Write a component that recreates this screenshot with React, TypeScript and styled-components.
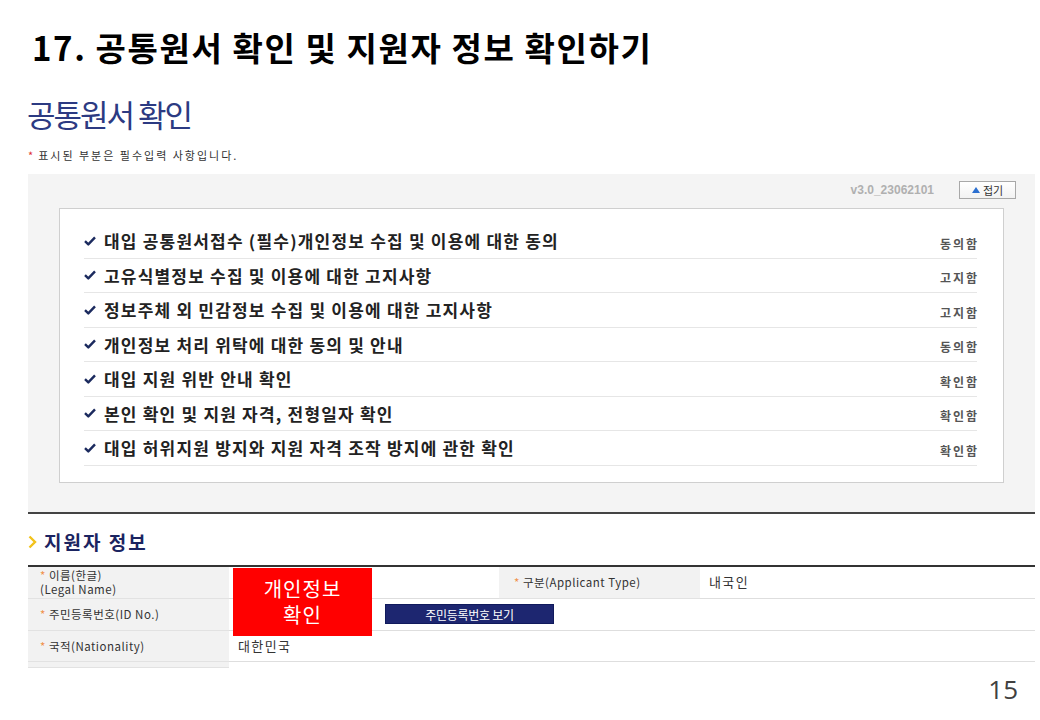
import React from "react"
import styled, { createGlobalStyle } from "styled-components"

const KR = `"Noto Sans CJK KR", "Liberation Sans", sans-serif`

const GlobalStyle = createGlobalStyle`
	html, body {
		margin: 0;
		padding: 0;
		background: #ffffff;
	}
	body {
		font-family: ${KR};
		color: #222;
	}
`

type Agreement = {
	text: string
	status: string
}

const agreements: Agreement[] = [
	{ text: "대입 공통원서접수 (필수)개인정보 수집 및 이용에 대한 동의", status: "동의함" },
	{ text: "고유식별정보 수집 및 이용에 대한 고지사항", status: "고지함" },
	{ text: "정보주체 외 민감정보 수집 및 이용에 대한 고지사항", status: "고지함" },
	{ text: "개인정보 처리 위탁에 대한 동의 및 안내", status: "동의함" },
	{ text: "대입 지원 위반 안내 확인", status: "확인함" },
	{ text: "본인 확인 및 지원 자격, 전형일자 확인", status: "확인함" },
	{ text: "대입 허위지원 방지와 지원 자격 조작 방지에 관한 확인", status: "확인함" },
]

const Slide = styled.div`
	width: 1040px;
	height: 720px;
	box-sizing: border-box;
	padding: 24px 5px 0 28px;
	display: flex;
	flex-direction: column;
	overflow: hidden;
`

const SlideTitle = styled.h1`
	margin: 0 0 0 4px;
	font-family: ${KR};
	font-size: 33px;
	font-weight: 700;
	line-height: 46px;
	color: #000;
	letter-spacing: 1.6px;
`

const PageHeading = styled.h2`
	margin: 24px 0 0 -1px;
	font-family: ${KR};
	font-size: 31px;
	font-weight: 400;
	line-height: 40px;
	color: #2c3a82;
	letter-spacing: -2px;
`

const Note = styled.p`
	margin: 13px 0 0;
	font-size: 11px;
	line-height: 16px;
	color: #333;
	letter-spacing: 2px;
`

const Star = styled.span`
	color: #f0904a;
	margin-right: 3px;
`

const RedStar = styled(Star)`
	color: #e03030;
`

const Panel = styled.section`
	margin-top: 11px;
	background: #f4f4f4;
	border-bottom: 2px solid #444;
	padding: 7px 31px 29px;
	display: flex;
	flex-direction: column;
`

const PanelHead = styled.div`
	display: flex;
	justify-content: flex-end;
	align-items: center;
	gap: 25px;
	margin-right: -12px;
	height: 18px;
`

const Version = styled.span`
	font-family: "Liberation Sans", Arial, sans-serif;
	font-size: 12px;
	font-weight: 700;
	color: #b0b0b0;
`

const FoldButton = styled.button`
	width: 57px;
	height: 18px;
	padding: 0;
	border: 1px solid #a8a8a8;
	background: linear-gradient(#ffffff, #f2f2f2);
	font-family: ${KR};
	font-size: 11px;
	color: #333;
	display: flex;
	align-items: center;
	justify-content: center;
	gap: 3px;
`

const Tri = styled.span`
	width: 0;
	height: 0;
	border-left: 4px solid transparent;
	border-right: 4px solid transparent;
	border-bottom: 6px solid #2b6fd0;
`

const AgreeBox = styled.div`
	margin-top: 9px;
	background: #fff;
	border: 1px solid #cfcfcf;
	padding: 15px 26px 16px 24px;
`

const AgreeRow = styled.div`
	height: 33.5px;
	border-bottom: 1px solid #e6e6e6;
	display: flex;
	align-items: center;
`

const Check = styled.svg`
	width: 12px;
	height: 10px;
	flex: none;
	margin-right: 8px;
`

const AgreeText = styled.span`
	flex: 1;
	font-size: 17px;
	font-weight: 700;
	color: #222;
	letter-spacing: 1.2px;
`

const Status = styled.span`
	font-size: 12px;
	font-weight: 700;
	color: #555;
	letter-spacing: 2px;
	margin-right: -2px;
	padding-top: 5px;
`

const SectionTitle = styled.h3`
	margin: 14px 0 0;
	display: flex;
	align-items: center;
	gap: 7px;
	font-size: 19px;
	font-weight: 700;
	line-height: 28px;
	color: #1b2461;
	letter-spacing: 2px;
`

const InfoWrap = styled.div`
	position: relative;
	margin-top: 9px;
`

const InfoTable = styled.div`
	display: grid;
	grid-template-columns: 201px 270px 201px 1fr;
	grid-template-rows: 32px 32px 31px 6px;
	border-top: 2px solid #333;
`

const Cell = styled.div<{ $label?: boolean; $span?: number; $row?: boolean }>`
	grid-column: span ${p => p.$span ?? 1};
	background: ${p => (p.$label ? "#f2f2f2" : "#fff")};
	border-bottom: ${p => (p.$label ? "1px solid #e2e2e2" : "1px solid #dedede")};
	display: flex;
	flex-direction: ${p => (p.$row ? "row" : "column")};
	justify-content: ${p => (p.$row ? "flex-start" : "center")};
	align-items: ${p => (p.$row ? "center" : "stretch")};
	padding-left: ${p => (p.$label ? "12px" : "9px")};
	font-size: ${p => (p.$label ? "11.5px" : "13px")};
	letter-spacing: ${p => (p.$label ? "0.5px" : "1.4px")};
	line-height: 14px;
	color: #333;
	overflow: hidden;
`

const Blank = styled.div`
	grid-column: span 3;
`

const ViewButton = styled.button`
	margin-left: 147px;
	width: 169px;
	height: 20px;
	padding: 0;
	border: 1px solid #101a5c;
	background: #1d2670;
	color: #fff;
	font-family: ${KR};
	font-size: 12px;
	letter-spacing: -0.3px;
`

const PrivacyMask = styled.div`
	position: absolute;
	left: 205px;
	top: 3px;
	width: 139px;
	height: 68px;
	background: #ff0000;
	color: #fff;
	display: flex;
	flex-direction: column;
	align-items: center;
	justify-content: center;
	font-size: 20px;
	line-height: 26px;
	letter-spacing: 1px;
`

const Footer = styled.div`
	margin-top: auto;
	height: 46px;
	display: flex;
	justify-content: flex-end;
	align-items: flex-start;
	padding-right: 17px;
`

const PageNo = styled.span`
	font-family: "Open Sans", "Liberation Sans", sans-serif;
	font-size: 26px;
	line-height: 30px;
	color: #404040;
`

function CheckMark() {
	return (
		<Check viewBox="0 0 12 10">
			<path d="M1 5.2 L4.3 8.4 L11 1.4" fill="none" stroke="#1b2a5e" strokeWidth="2.4" strokeLinejoin="round" />
		</Check>
	)
}

function Chevron() {
	return (
		<svg width="9" height="14" viewBox="0 0 9 14">
			<path d="M1.5 1.5 L7 7 L1.5 12.5" fill="none" stroke="#f2c21b" strokeWidth="2.4" />
		</svg>
	)
}

export default function App() {
	return (
		<>
			<GlobalStyle />
			<Slide>
				<SlideTitle>17. 공통원서 확인 및 지원자 정보 확인하기</SlideTitle>
				<PageHeading>공통원서 확인</PageHeading>
				<Note>
					<RedStar>*</RedStar>표시된 부분은 필수입력 사항입니다.
				</Note>
				<Panel>
					<PanelHead>
						<Version>v3.0_23062101</Version>
						<FoldButton>
							<Tri />
							접기
						</FoldButton>
					</PanelHead>
					<AgreeBox>
						{agreements.map(a => (
							<AgreeRow key={a.text}>
								<CheckMark />
								<AgreeText>{a.text}</AgreeText>
								<Status>{a.status}</Status>
							</AgreeRow>
						))}
					</AgreeBox>
				</Panel>
				<SectionTitle>
					<Chevron />
					지원자 정보
				</SectionTitle>
				<InfoWrap>
					<InfoTable>
						<Cell $label>
							<span>
								<Star>*</Star>이름(한글)
							</span>
							<span>(Legal Name)</span>
						</Cell>
						<Cell />
						<Cell $label>
							<span style={{ paddingLeft: 3 }}>
								<Star>*</Star>구분(Applicant Type)
							</span>
						</Cell>
						<Cell>내국인</Cell>
						<Cell $label>
							<span>
								<Star>*</Star>주민등록번호(ID No.)
							</span>
						</Cell>
						<Cell $span={3} $row>
							<ViewButton>주민등록번호 보기</ViewButton>
						</Cell>
						<Cell $label>
							<span>
								<Star>*</Star>국적(Nationality)
							</span>
						</Cell>
						<Cell $span={3}>대한민국</Cell>
						<Cell $label />
						<Blank />
					</InfoTable>
					<PrivacyMask>
						<span>개인정보</span>
						<span>확인</span>
					</PrivacyMask>
				</InfoWrap>
				<Footer>
					<PageNo>15</PageNo>
				</Footer>
			</Slide>
		</>
	)
}
